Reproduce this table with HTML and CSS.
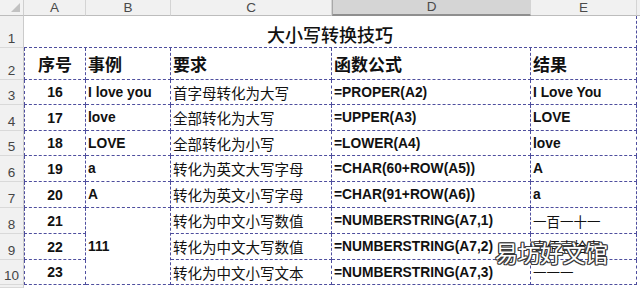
FILE: index.html
```html
<!DOCTYPE html>
<html lang="zh-CN">
<head>
<meta charset="utf-8">
<title>大小写转换技巧</title>
<link rel="stylesheet" href="styles.css">
</head>
<body>
<div class="sheet">
  <div class="corner"><span class="tri"></span></div>
  <div class="ch">A</div>
  <div class="ch">B</div>
  <div class="ch">C</div>
  <div class="ch sel">D</div>
  <div class="ch">E</div>
  <div class="ch rest"></div>

  <div class="rh">1</div>
  <div class="title">大小写转换技巧</div>
  <div class="fill"></div>

  <div class="rh">2</div>
  <div class="c a hd">序号</div>
  <div class="c hd">事例</div>
  <div class="c hd">要求</div>
  <div class="c hd">函数公式</div>
  <div class="c hd">结果</div>
  <div class="fill"></div>

  <div class="rh">3</div>
  <div class="c a b">16</div>
  <div class="c b">I love you</div>
  <div class="c zh">首字母转化为大写</div>
  <div class="c b">=PROPER(A2)</div>
  <div class="c b">I Love You</div>
  <div class="fill"></div>

  <div class="rh">4</div>
  <div class="c a b">17</div>
  <div class="c b">love</div>
  <div class="c zh">全部转化为大写</div>
  <div class="c b">=UPPER(A3)</div>
  <div class="c b">LOVE</div>
  <div class="fill"></div>

  <div class="rh">5</div>
  <div class="c a b">18</div>
  <div class="c b">LOVE</div>
  <div class="c zh">全部转化为小写</div>
  <div class="c b">=LOWER(A4)</div>
  <div class="c b">love</div>
  <div class="fill"></div>

  <div class="rh">6</div>
  <div class="c a b">19</div>
  <div class="c b">a</div>
  <div class="c zh">转化为英文大写字母</div>
  <div class="c b">=CHAR(60+ROW(A5))</div>
  <div class="c b">A</div>
  <div class="fill"></div>

  <div class="rh">7</div>
  <div class="c a b">20</div>
  <div class="c b">A</div>
  <div class="c zh">转化为英文小写字母</div>
  <div class="c b">=CHAR(91+ROW(A6))</div>
  <div class="c b">a</div>
  <div class="fill"></div>

  <div class="rh">8</div>
  <div class="c a b">21</div>
  <div class="c b merged">111</div>
  <div class="c zh">转化为中文小写数值</div>
  <div class="c b">=NUMBERSTRING(A7,1)</div>
  <div class="c zs">一百一十一</div>
  <div class="fill"></div>

  <div class="rh">9</div>
  <div class="c a b">22</div>
  <div class="c zh">转化为中文大写数值</div>
  <div class="c b">=NUMBERSTRING(A7,2)</div>
  <div class="c zs up">壹佰壹拾壹</div>
  <div class="fill"></div>

  <div class="rh">10</div>
  <div class="c a b">23</div>
  <div class="c zh">转化为中文小写文本</div>
  <div class="c b">=NUMBERSTRING(A7,3)</div>
  <div class="c zs">一一一</div>
  <div class="fill"></div>

  <div class="rh"></div>
  <div class="tail"></div>

  <div class="watermark">易坊好文馆</div>
</div>
</body>
</html>
```
FILE: styles.css
```css
html, body {
  margin: 0;
  padding: 0;
  background: #ffffff;
}

body {
  font-family: "Liberation Sans", "Noto Sans CJK SC", sans-serif;
  color: #111111;
}

.sheet {
  position: relative;
  width: 640px;
  height: 288px;
  overflow: hidden;
  display: grid;
  grid-template-columns: 24px 62px 85px 161px 199px 106px 1fr;
  grid-template-rows: 16px 32px 32px 25px 26px 25px 26px 26px 26px 26px 25px 1fr;
}

.sheet > div {
  box-sizing: border-box;
}

.corner {
  position: relative;
  background: #f2f2f2;
  border-right: 1px solid #cfcfcf;
  border-bottom: 1px solid #bdbdbd;
}

.tri {
  position: absolute;
  right: 3px;
  bottom: 3px;
  width: 0;
  height: 0;
  border-left: 9px solid transparent;
  border-bottom: 9px solid #c2c2c2;
}

.ch {
  background: #f1f1f1;
  border-right: 1px solid #d4d4d4;
  border-bottom: 1px solid #bdbdbd;
  color: #4a4a4a;
  font-size: 13.5px;
  display: flex;
  align-items: flex-end;
  justify-content: center;
  line-height: 15px;
}

.ch.sel {
  background: #d5d5d5;
  border-bottom: 2px solid #8f8f8f;
  border-left: 1px solid #a8a8a8;
}

.ch.rest {
  border-right: none;
}

.rh {
  background: #f1f1f1;
  border-right: 1px solid #cbcbcb;
  border-bottom: 1px solid #d9d9d9;
  color: #454545;
  font-size: 13.5px;
  display: flex;
  align-items: flex-end;
  justify-content: center;
  padding-bottom: 1px;
  line-height: 15px;
}

.title {
  grid-column: span 5;
  border-right: 1px dashed #4e4e9e;
  border-bottom: 1px dashed #4e4e9e;
  display: flex;
  align-items: center;
  justify-content: center;
  padding-top: 5px;
  font-family: "Noto Sans CJK SC", sans-serif;
  font-size: 18px;
  font-weight: 500;
  color: #111111;
}

.fill {
  background: #ffffff;
}

.tail {
  grid-column: span 6;
  background: #ffffff;
}

.c {
  border-right: 1px dashed #4e4e9e;
  border-bottom: 1px dashed #4e4e9e;
  display: flex;
  align-items: center;
  padding-left: 2px;
  white-space: nowrap;
  font-size: 13.8px;
  color: #111111;
}

.c.a {
  border-left: 1px dashed #4e4e9e;
  justify-content: center;
  padding-left: 0;
  font-size: 14px;
}

.c.b {
  font-weight: bold;
}

.c.hd {
  font-family: "Noto Sans CJK SC", sans-serif;
  font-weight: bold;
  font-size: 17px;
}

.c.zh {
  font-family: "Noto Sans CJK SC", sans-serif;
  font-size: 14.5px;
}

.c.zs {
  font-family: "Noto Sans CJK SC", sans-serif;
  font-size: 13.5px;
}

.c.up {
  align-items: flex-start;
  padding-top: 2px;
}

.c.merged {
  grid-row: span 3;
}

.watermark {
  position: absolute;
  left: 495px;
  top: 239px;
  font-family: "Noto Sans CJK SC", sans-serif;
  font-size: 23px;
  line-height: 26px;
  letter-spacing: -0.5px;
  color: #ffffff;
  text-shadow:
    1px 0 0 #3a3a3a, -1px 0 0 #3a3a3a,
    0 1px 0 #3a3a3a, 0 -1px 0 #3a3a3a,
    1px 1px 0 #3a3a3a, -1px -1px 0 #3a3a3a,
    1px -1px 0 #3a3a3a, -1px 1px 0 #3a3a3a;
}
```
